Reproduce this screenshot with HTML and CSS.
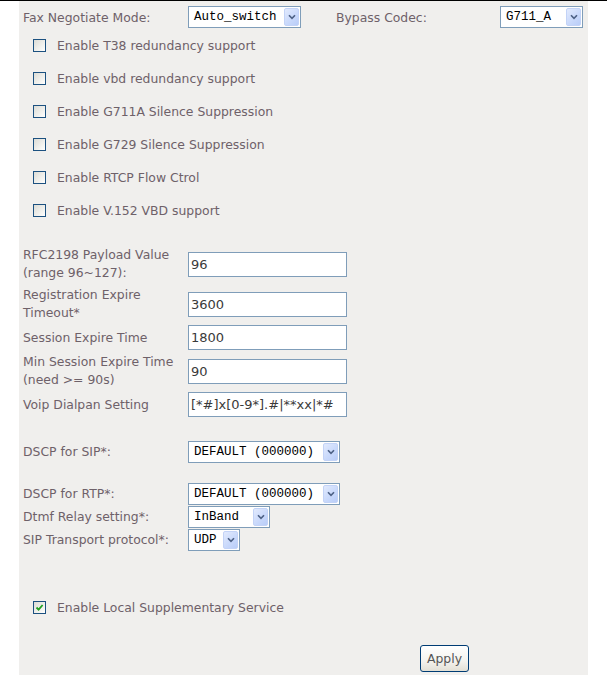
FILE: index.html
```html
<!DOCTYPE html>
<html>
<head>
<meta charset="utf-8">
<link rel="stylesheet" href="styles.css">
</head>
<body>
<div class="topline"></div>
<div class="panel">
  <div class="toprow">
    <span class="lbl-fax">Fax Negotiate Mode:</span>
    <div class="sel w-auto"><span class="sel-text">Auto_switch</span><span class="arr"><svg width="8" height="6" viewBox="0 0 8 6"><path d="M1 1.2 L4 4.4 L7 1.2" fill="none" stroke="#4d6185" stroke-width="1.6"/></svg></span></div>
    <span class="lbl-bypass">Bypass Codec:</span>
    <div class="sel w-g711"><span class="sel-text">G711_A</span><span class="arr"><svg width="8" height="6" viewBox="0 0 8 6"><path d="M1 1.2 L4 4.4 L7 1.2" fill="none" stroke="#4d6185" stroke-width="1.6"/></svg></span></div>
  </div>

  <div class="checks">
    <div class="chk"><span class="cb"></span><span>Enable T38 redundancy support</span></div>
    <div class="chk"><span class="cb"></span><span>Enable vbd redundancy support</span></div>
    <div class="chk"><span class="cb"></span><span>Enable G711A Silence Suppression</span></div>
    <div class="chk"><span class="cb"></span><span>Enable G729 Silence Suppression</span></div>
    <div class="chk"><span class="cb"></span><span>Enable RTCP Flow Ctrol</span></div>
    <div class="chk"><span class="cb"></span><span>Enable V.152 VBD support</span></div>
  </div>

  <div class="form">
    <div class="lbl two">RFC2198 Payload Value<br>(range 96~127):</div>
    <input class="txt" type="text" value="96">
    <div class="lbl two">Registration Expire<br>Timeout*</div>
    <input class="txt" type="text" value="3600">
    <div class="lbl">Session Expire Time</div>
    <input class="txt" type="text" value="1800">
    <div class="lbl two">Min Session Expire Time<br>(need &gt;= 90s)</div>
    <input class="txt" type="text" value="90">
    <div class="lbl">Voip Dialpan Setting</div>
    <input class="txt" type="text" value="[*#]x[0-9*].#|**xx|*#">
  </div>

  <div class="form sip">
    <div class="lbl">DSCP for SIP*:</div>
    <div class="sel w-dscp"><span class="sel-text">DEFAULT (000000)</span><span class="arr"><svg width="8" height="6" viewBox="0 0 8 6"><path d="M1 1.2 L4 4.4 L7 1.2" fill="none" stroke="#4d6185" stroke-width="1.6"/></svg></span></div>
  </div>

  <div class="form rtp">
    <div class="lbl">DSCP for RTP*:</div>
    <div class="sel w-dscp"><span class="sel-text">DEFAULT (000000)</span><span class="arr"><svg width="8" height="6" viewBox="0 0 8 6"><path d="M1 1.2 L4 4.4 L7 1.2" fill="none" stroke="#4d6185" stroke-width="1.6"/></svg></span></div>
    <div class="lbl">Dtmf Relay setting*:</div>
    <div class="sel w-dtmf"><span class="sel-text">InBand</span><span class="arr"><svg width="8" height="6" viewBox="0 0 8 6"><path d="M1 1.2 L4 4.4 L7 1.2" fill="none" stroke="#4d6185" stroke-width="1.6"/></svg></span></div>
    <div class="lbl">SIP Transport protocol*:</div>
    <div class="sel w-udp"><span class="sel-text">UDP</span><span class="arr"><svg width="8" height="6" viewBox="0 0 8 6"><path d="M1 1.2 L4 4.4 L7 1.2" fill="none" stroke="#4d6185" stroke-width="1.6"/></svg></span></div>
  </div>

  <div class="chk local"><span class="cb checked"><svg width="9" height="9" viewBox="0 0 9 9"><path d="M1.5 4.5 L3.6 6.6 L7.6 2" fill="none" stroke="#21a121" stroke-width="1.8"/></svg></span><span>Enable Local Supplementary Service</span></div>

  <div class="actions"><button class="btn" type="button">Apply</button></div>
</div>
</body>
</html>
```
FILE: styles.css
```css
body {
  margin: 0;
  background: #ffffff;
  font-family: "DejaVu Sans", sans-serif;
  font-size: 12.4px;
  color: #6e6169;
}

.topline {
  height: 1px;
  background: #000000;
}

.panel {
  margin-left: 19px;
  width: 569px;
  height: 674px;
  box-sizing: border-box;
  padding: 5px 0 0 4px;
  background: #f0efed;
}

.toprow {
  display: flex;
  align-items: center;
  height: 22px;
}

.lbl-fax {
  width: 165px;
}

.lbl-bypass {
  width: 164px;
  margin-left: 35px;
}

.sel {
  display: flex;
  align-items: stretch;
  height: 22px;
  box-sizing: border-box;
  border: 1px solid #7f9db9;
  background: #ffffff;
  padding: 1px;
}

.sel-text {
  flex: 1;
  padding-left: 4px;
  font-family: "Liberation Mono", monospace;
  font-size: 12.5px;
  line-height: 18px;
  color: #000000;
  white-space: nowrap;
  overflow: hidden;
}

.arr {
  width: 15px;
  display: flex;
  align-items: center;
  justify-content: center;
  box-sizing: border-box;
  border: 1px solid #c3d3f7;
  border-radius: 2px;
  background: linear-gradient(135deg, #e2eafd 0%, #c8d8fb 60%, #b9cdf8 100%);
}

.w-auto { width: 113px; }
.w-g711 { width: 83px; }
.w-dscp { width: 152px; }
.w-dtmf { width: 82px; }
.w-udp { width: 52px; }

.checks {
  margin-top: 1px;
  padding-left: 10px;
}

.chk {
  display: flex;
  align-items: center;
  gap: 11px;
  height: 33px;
}

.cb {
  width: 13px;
  height: 13px;
  box-sizing: border-box;
  border: 1px solid #1c5180;
  background: linear-gradient(135deg, #dcdcd6 0%, #f4f4f1 70%, #ffffff 100%);
  display: flex;
  align-items: center;
  justify-content: center;
}

.form {
  display: grid;
  grid-template-columns: 165px auto;
  align-items: center;
  justify-items: start;
  margin-top: 17px;
}

.lbl {
  line-height: 18px;
}

.lbl.two {
  padding: 2px 0;
}

.txt {
  width: 159px;
  height: 25px;
  box-sizing: border-box;
  margin: 1px 0;
  padding: 0 2px;
  border: 1px solid #7f9db9;
  background: #ffffff;
  font-family: "DejaVu Sans", sans-serif;
  font-size: 13px;
  color: #3a3a3a;
  outline: none;
}

.form.sip {
  margin-top: 23px;
}

.form.rtp {
  margin-top: 20px;
  row-gap: 1px;
}

.chk.local {
  margin-top: 40px;
  padding-left: 10px;
}

.actions {
  margin-top: 21px;
  padding-left: 397px;
}

.btn {
  width: 49px;
  height: 27px;
  box-sizing: border-box;
  border: 1px solid #003c74;
  border-radius: 3px;
  background: linear-gradient(180deg, #ffffff 0%, #f4f3ee 60%, #e3e0d5 100%);
  font-family: "DejaVu Sans", sans-serif;
  font-size: 12.4px;
  color: #555555;
  padding: 0;
}
```
